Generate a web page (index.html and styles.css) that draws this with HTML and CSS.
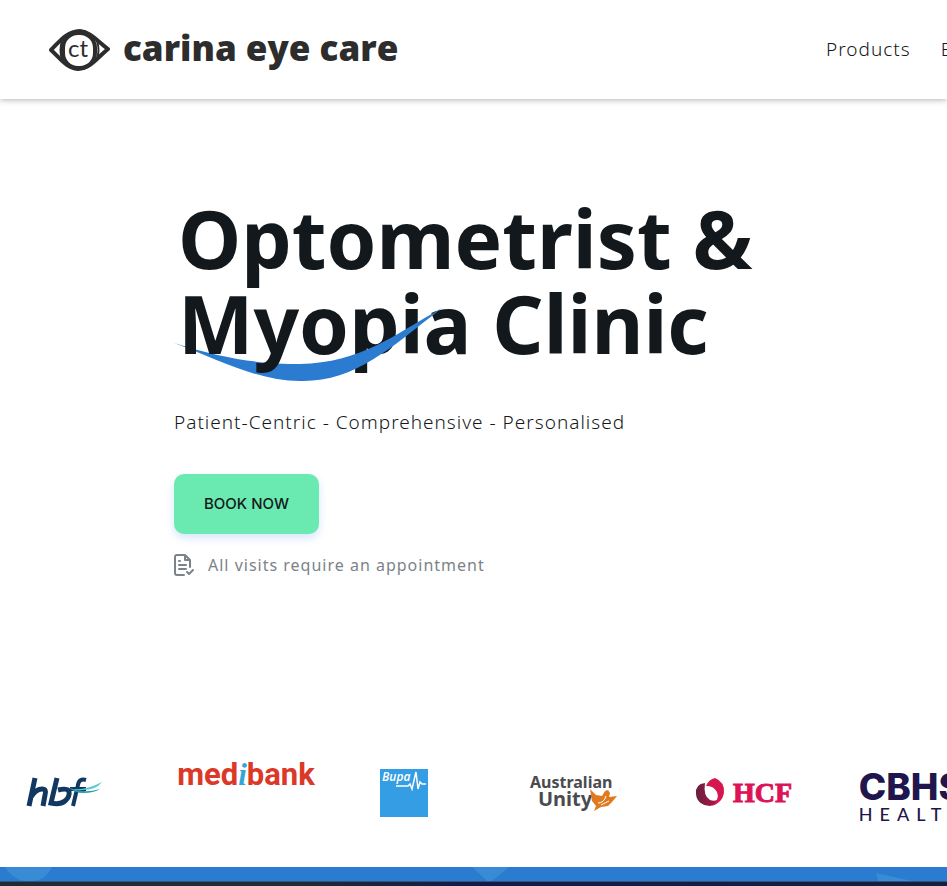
FILE: index.html
```html
<!DOCTYPE html>
<html lang="en">
<head>
<meta charset="utf-8">
<title>Carina Eye Care</title>
<link rel="stylesheet" href="styles.css">
</head>
<body>
<header class="header">
  <a class="brand" href="#" aria-label="Carina Eye Care home">
    <svg class="brand-eye" width="62" height="44" viewBox="0 0 62 44">
      <g fill="none" stroke="#2d2d2d" stroke-linejoin="round">
        <path d="M3 22C13 12 18 4 32 3C43 4 49 13 60 21C49 30 43 40 30 41C18 40 13 31 3 22Z" stroke-width="4"/>
        <rect x="15" y="5" width="32" height="35" rx="15" stroke-width="4"/>
        <path d="M14 13Q11 22 14 31M49 13Q52 22 49 31" stroke-width="2"/>
      </g>
      <text class="eye-text" x="20" y="29">ct</text>
    </svg>
    <span class="brand-name">carina eye care</span>
  </a>
  <nav class="nav">
    <a href="#">Products</a>
    <a href="#">Blog</a>
  </nav>
</header>
<main>
  <section class="hero">
    <h1 class="title">Optometrist &amp;<br><span class="marked"><span class="above">Myo</span>pia<svg class="swoosh" viewBox="0 0 266 74" preserveAspectRatio="none"><path d="M0 35C50 51 85 56 125 56C185 55 220 26 266 0C215 40 180 73 128 73C85 74 45 52 0 35Z" fill="#2b7cd0"/></svg></span> Clinic</h1>
    <p class="lead">Patient-Centric - Comprehensive - Personalised</p>
    <button class="book" type="button">BOOK NOW</button>
    <p class="note">
      <svg width="20" height="22" viewBox="0 0 20 22" fill="none" stroke="#7b8388" stroke-width="2" stroke-linecap="round" stroke-linejoin="round">
        <path d="M10 21H3Q1 21 1 19V3Q1 1 3 1H11L16 6V13M11 1V6H16M5 7H6M5 11H12M5 15H12M13 18L15 20L19 16"/>
      </svg>
      <span>All visits require an appointment</span>
    </p>
  </section>
  <section class="funds" aria-label="Health funds">
    <div class="fund">
      <svg width="76" height="32" viewBox="0 0 76 32">
        <g fill="none" stroke="#123861" stroke-width="5">
          <path d="M9 1L3 29M5 20Q10 12 16 12Q21 12 19 18L17 29"/>
          <path d="M31 1L25 26Q34 28 39 24Q44 20 43 14Q41 11 32 13"/>
          <path d="M60 3Q53 1 52 8L47 29M44 12H60" stroke-width="4"/>
        </g>
        <path d="M38 9Q53 17 76 5Q70 13 57 13Q47 14 38 9Z" fill="#5acbd0"/>
        <path d="M43 11Q58 17 74 12Q68 16 57 16Q49 16 43 11Z" fill="#2b99ac"/>
      </svg>
    </div>
    <div class="fund fund-medibank"><span class="medibank">med<i>i</i>bank</span></div>
    <div class="fund">
      <svg width="48" height="48" viewBox="0 0 48 48">
        <path d="M0 0H48V48H0Z" fill="#359de3"/>
        <text class="bupa" x="2" y="12">Bupa</text>
        <path d="M16 17H28L30 15L32 20L36 3L38 20L40 13L42 15H46" fill="none" stroke="#fff" stroke-width="1.5"/>
      </svg>
    </div>
    <div class="fund">
      <svg width="90" height="42" viewBox="0 0 90 42">
        <text class="unity" x="1" y="16" font-size="16">Australian</text>
        <text class="unity" x="9" y="34" font-size="20">Unity</text>
        <path d="M61 17L67 23L73 24L76 19L79 18L81 21L80 25L88 24L83 30L79 34L72 35L65 39L67 34L63 29Z" fill="#e07920"/>
        <path d="M69 31Q75 31 77 24M72 33L80 29" fill="none" stroke="#fff" stroke-width="1"/>
      </svg>
    </div>
    <div class="fund">
      <svg width="98" height="32" viewBox="0 0 98 32">
        <defs><linearGradient id="petal"><stop offset="0" stop-color="#67203d"/><stop offset="1" stop-color="#b41748"/></linearGradient></defs>
        <path d="M10 6Q0 7 1 17Q2 28 15 29Q21 28 24 22Q20 25 15 23Q8 19 10 6Z" fill="url(#petal)"/>
        <path d="M11 9Q14 2 20 1Q30 5 29 16Q27 26 17 29Q25 22 22 15Q18 8 11 9Z" fill="#d71650"/>
        <path d="M12 10Q9 20 17 22Q21 20 19 13Q16 9 12 10Z" fill="#fff"/>
        <text class="hcf" x="38" y="25">HCF</text>
      </svg>
    </div>
    <div class="fund">
      <div class="cbhs"><b>CBHS</b><span>HEALTH</span></div>
    </div>
  </section>
  <section class="band">
    <svg class="shapes" width="947" height="14" viewBox="0 0 947 14"><path d="M5 0Q14 14 27 14H32Q45 14 52 0ZM472 0H509L492 14H487ZM876 6L912 14H878Z" fill="#398bd5"/></svg>
  </section>
  <section class="dark"></section>
</main>
</body>
</html>
```
FILE: styles.css
```css
* { box-sizing: border-box; }
body {
  margin: 0;
  min-height: 100vh;
  display: flex;
  flex-direction: column;
  overflow-x: hidden;
  background: #fff;
  color: #12181b;
  font-family: "Noto Sans", "Open Sans", sans-serif;
}
a { color: inherit; text-decoration: none; }
main { flex: 1; display: flex; flex-direction: column; }

.header {
  display: flex;
  align-items: center;
  justify-content: space-between;
  height: 99px;
  padding-left: 48px;
  box-shadow: 0 1px 6px rgba(0, 0, 0, 0.3);
}
.brand { display: flex; align-items: center; gap: 13px; }
.brand-name {
  color: #2d2d2d;
  font: 800 35px/44px "Open Sans", sans-serif;
  padding-bottom: 4px;
}
.eye-text { font: 24px Lato, sans-serif; fill: #2d2d2d; }
.nav {
  display: flex;
  flex: 0 0 121px;
  gap: 30px;
  overflow: hidden;
  padding-bottom: 2px;
  font-size: 19px;
  font-weight: 300;
  letter-spacing: 1px;
  white-space: nowrap;
}

.hero { padding: 96px 174px 0; }
.title {
  margin: 0 0 0 4px;
  font: 700 80px/85px "Noto Sans", sans-serif;
  white-space: nowrap;
}
.marked, .above { position: relative; }
.above { z-index: 1; }
.swoosh { position: absolute; left: -4px; bottom: -5px; width: 268px; height: 74px; }
.lead { margin: 43px 0 38px; font-size: 19px; font-weight: 300; line-height: 28px; letter-spacing: 1px; white-space: nowrap; }
.book {
  display: block;
  padding: 0 30px 2px;
  height: 60px;
  border: 0;
  border-radius: 10px;
  background: #6ae9b1;
  color: #12181b;
  font: 500 15px Inter, sans-serif;
  box-shadow: 0 4px 8px rgba(43, 124, 240, 0.2);
}
.note { display: flex; align-items: center; gap: 14px; margin: 20px 0 0; color: #7b8388; font-size: 16px; line-height: 22px; letter-spacing: 1px; }

.funds { display: flex; margin: 164px 0 0 -21px; height: 127px; overflow: hidden; }
.fund { flex: 0 0 170px; height: 106px; display: flex; align-items: center; justify-content: center; }
.fund-medibank { padding: 0 0 36px 24px; }
.medibank { font: 700 31px/40px Roboto, sans-serif; color: #dc3828; }
.medibank i { font-family: "Liberation Serif", serif; color: #35a6d8; }
.bupa { font: italic 600 12px "Open Sans", sans-serif; fill: #fff; }
.unity { font-family: "Noto Sans", sans-serif; font-weight: 700; fill: #4a4b4e; }
.hcf { font: 700 28px "Liberation Serif", serif; fill: #dc1455; stroke: #dc1455; }
.cbhs { display: flex; flex-direction: column; gap: 2px; color: #20164d; padding-top: 10px; }
.cbhs b { font: 800 37px/30px Inter, sans-serif; }
.cbhs span { font: 500 18px/20px Lato, sans-serif; letter-spacing: 7px; }
.band { height: 14px; background: #2b7cd0; overflow: hidden; }
.shapes { display: block; }
.dark { flex: 1; border-top: 1px solid #315477; background: linear-gradient(90deg, #1e2b35, #1e2b35 32%, #101b4a 50%, #13213e); }
```
